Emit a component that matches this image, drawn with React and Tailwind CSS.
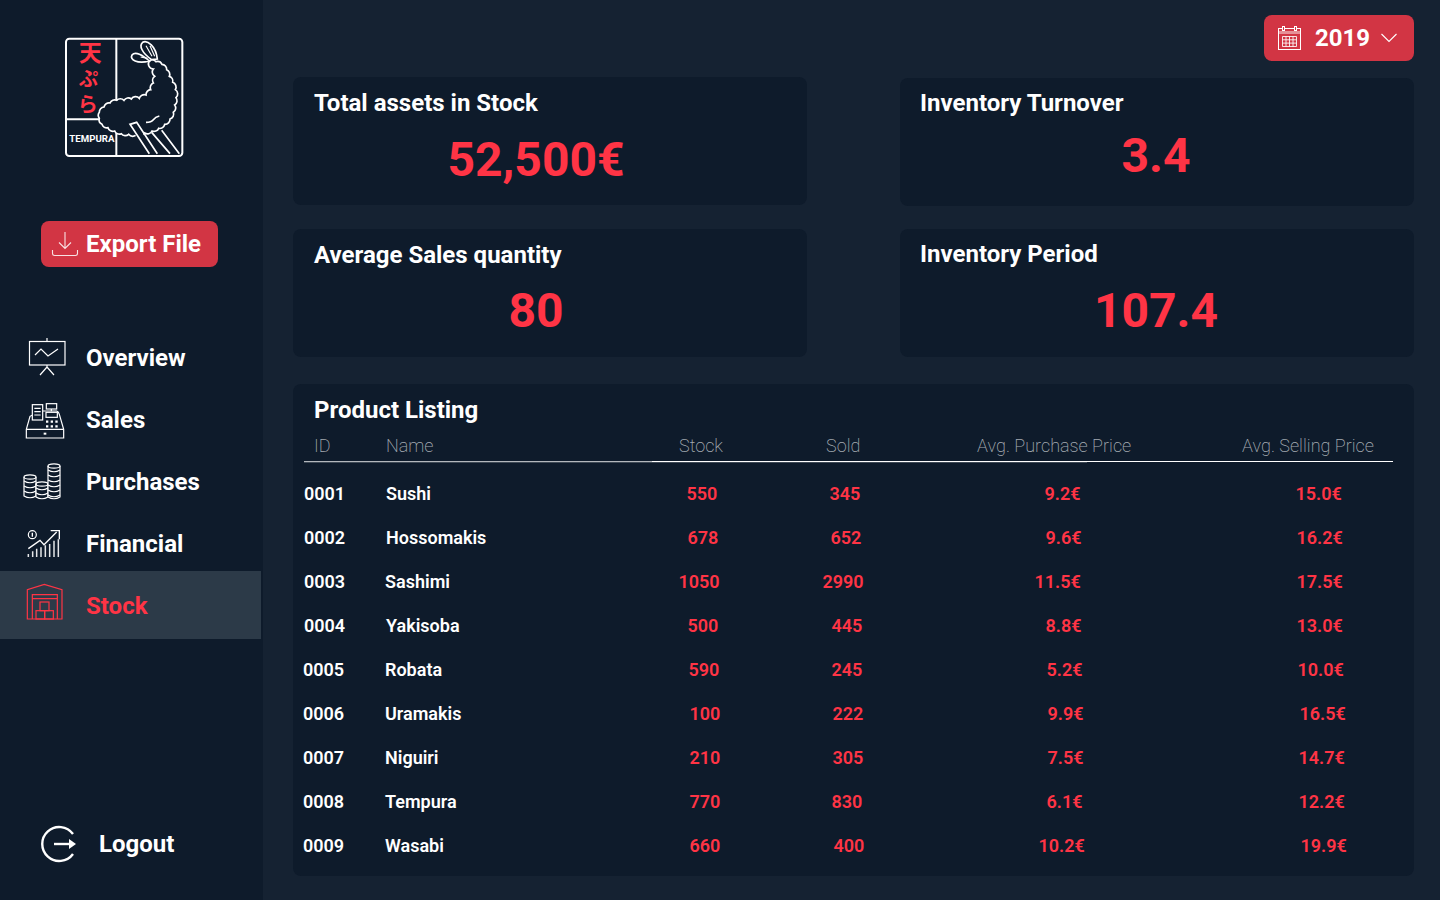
const ROBOTO = "font-['Roboto',sans-serif]";

function Logo() {
  const pts = [[300,106],[318,110],[336,118],[350,134],[358,154],[368,172],[376,194],[378,218],[374,240],[370,262],[360,282],[344,298],[326,310],[306,318],[284,324],[260,328],[236,328],[214,326],[194,318],[174,308],[156,298],[148,280],[148,262],[162,246],[180,234],[200,226],[222,226],[244,222],[268,220],[288,210],[302,194],[310,174],[314,154],[310,132],[300,106]];
  let d = `M${pts[0][0]} ${pts[0][1]}`;
  for (let i = 1; i < pts.length; i++) d += `A15 15 0 0 1 ${pts[i][0]} ${pts[i][1]}`;
  return (
    <svg width="150" height="145" viewBox="0 0 450 435" fill="none" stroke="#fff" strokeWidth="6">
      <path d="M199 42V392M49 283H197" />
      <path d={d} fill="#0e1b2b" strokeWidth="5" />
      <path d="M288 386L238 298L260 292L312 386Z" fill="#0e1b2b" stroke="none" />
      <path d="M356 392L304 326L334 318L388 392Z" fill="#0e1b2b" stroke="none" />
      <path d="M298 386L240 298L260 292L322 386" strokeWidth="5" />
      <path d="M360 386L305 322M388 386L335 316" strokeWidth="5" />
      <rect x="48" y="41" width="349" height="352" rx="10" />
      <path d="M305 104C276 84 266 62 278 52C292 44 318 64 322 102Z" strokeWidth="5" fill="#0e1b2b" />
      <path d="M298 108C278 90 256 78 246 90C238 104 262 118 298 108Z" strokeWidth="5" fill="#0e1b2b" />
      <path d="M288 62L306 94M300 62L314 94M272 96L292 100" strokeWidth="3.5" />
      <path d="M288 292Q304 292 310 284T328 273" strokeWidth="5" />
      <text x="121" y="108" textAnchor="middle" fill="#ff3445" stroke="none" fontSize="68" fontWeight="700" fontFamily="'Noto Sans CJK JP',sans-serif">天</text>
      <text x="115" y="184" textAnchor="middle" fill="#ff3445" stroke="none" fontSize="58" fontWeight="700" fontFamily="'Noto Sans CJK JP',sans-serif">ぷ</text>
      <text x="113" y="262" textAnchor="middle" fill="#ff3445" stroke="none" fontSize="60" fontWeight="700" fontFamily="'Noto Sans CJK JP',sans-serif">ら</text>
      <text x="58" y="350" fill="#fff" stroke="none" fontSize="29" fontWeight="700" fontFamily="'Roboto',sans-serif">TEMPURA</text>
    </svg>
  );
}

function OverviewIcon() {
  return (
    <svg width="40" height="40" viewBox="0 0 40 40" fill="none" stroke="#fff" strokeWidth="1.2">
      <path d="M19 0V3" />
      <rect x="1.5" y="3.5" width="35.5" height="23.5" />
      <path d="M7 17L13 11L20 18L30 11" />
      <path d="M19 27V29M12 37L19 29L26 37" />
    </svg>
  );
}
function SalesIcon() {
  return (
    <svg width="50" height="50" viewBox="0 0 150 150" fill="none" stroke="#fff" strokeWidth="3.6">
      <path d="M38 60L30 64L19 103V129H131V103L118 58Q116 50 110 48H69" />
      <path d="M19 103H131" />
      <rect x="37" y="29" width="31" height="46" fill="#0e1b2b" />
      <path d="M43 40H62M43 50H62M43 60H62" />
      <rect x="79" y="26" width="31" height="16" />
      <path d="M94 42V49" />
      <rect x="78" y="52" width="34" height="15" />
      <path d="M78 80h7M92 80h7M106 80h7M78 94h7M92 94h7M106 94h7" strokeWidth="7" />
      <path d="M71 116H79" strokeWidth="6" />
    </svg>
  );
}
function Stack({ x, top, bottom }) {
  const rows = [];
  for (let y = top + 4; y < bottom; y += 5) rows.push(y);
  return (
    <g>
      <path d={`M${x - 6} ${top}V${bottom}Q${x} ${bottom + 3.5} ${x + 6} ${bottom}V${top}`} fill="#0e1b2b" />
      <ellipse cx={x} cy={top} rx="6" ry="2.2" />
      {rows.map((y) => (
        <path key={y} d={`M${x - 6} ${y}Q${x} ${y + 3.5} ${x + 6} ${y}`} />
      ))}
    </g>
  );
}
function CoinsIcon() {
  return (
    <svg width="40" height="38" viewBox="0 0 40 38" fill="none" stroke="#fff" strokeWidth="1.2">
      <Stack x={8} top={14} bottom={33} />
      <Stack x={20} top={21} bottom={34} />
      <Stack x={32} top={3} bottom={34} />
    </svg>
  );
}
function FinancialIcon() {
  return (
    <svg width="50" height="45" viewBox="0 0 150 135" fill="none" stroke="#fff" strokeWidth="3.6">
      <circle cx="37" cy="38" r="12" />
      <path d="M37 32V44" strokeWidth="4" />
      <path d="M25 80L60 55L72 68L110 30" strokeWidth="4" />
      <path d="M92 26H118V52" strokeWidth="4" />
      <path d="M25 105V96M38 105V88M50 105V80M63 105V76M76 105V70M89 105V66M102 105V56M115 105V52" strokeWidth="4.5" stroke="#e4e6e8" />
    </svg>
  );
}
function StockIcon() {
  return (
    <svg width="40" height="38" viewBox="75 400 120 114" fill="none" stroke="#ff3445" strokeWidth="3.6">
      <path d="M82 508V420L133 404L186 420V508Z" />
      <path d="M97 508V435H172V508M97 447H172" />
      <rect x="120" y="457" width="27" height="26" />
      <rect x="108" y="483" width="26" height="25" />
      <rect x="134" y="483" width="26" height="25" />
    </svg>
  );
}
function DownloadIcon() {
  return (
    <svg width="28" height="26" viewBox="0 0 28 26" fill="none" stroke="#fff" strokeOpacity="0.85" strokeWidth="1.1">
      <path d="M14 1V17M8 11.5L14 17.5L20 11.5" />
      <path d="M1.5 19V22.5Q1.5 24.5 3.5 24.5H24.5Q26.5 24.5 26.5 22.5V19" />
    </svg>
  );
}
function CalendarIcon() {
  return (
    <svg width="23" height="24" viewBox="0 0 23 24" fill="none" stroke="#fff" strokeWidth="1">
      <rect x="0.5" y="2.5" width="22" height="21" />
      <rect x="1" y="5" width="21" height="3" fill="#fff" fillOpacity="0.45" stroke="none" />
      <rect x="4.5" y="0.5" width="2" height="4" fill="#d23544" />
      <rect x="16.5" y="0.5" width="2" height="4" fill="#d23544" />
      <path d="M4.5 10.5H18.5V20.5H4.5ZM4.5 13.8H18.5M4.5 17.1H18.5M8 10.5V20.5M11.5 10.5V20.5M15 10.5V20.5" strokeOpacity="0.85" />
    </svg>
  );
}
function LogoutIcon() {
  return (
    <svg width="38" height="38" viewBox="0 0 38 38" fill="none" stroke="#fff">
      <path d="M33 9A17 17 0 1 0 33 29" strokeWidth="2.4" />
      <path d="M14 19H31" strokeWidth="2.4" />
      <path d="M29 14L36 19L29 24Z" fill="#fff" stroke="none" />
    </svg>
  );
}

const NAV = [
  { label: "Overview", icon: <OverviewIcon />, ml: "ml-[28px]", w: "w-[58px]" },
  { label: "Sales", icon: <SalesIcon />, ml: "ml-[20px]", w: "w-[66px]" },
  { label: "Purchases", icon: <CoinsIcon />, ml: "ml-[22px]", w: "w-[64px]" },
  { label: "Financial", icon: <FinancialIcon />, ml: "ml-[20px]", w: "w-[66px]" },
];

function Sidebar() {
  return (
    <aside className="w-[263px] h-[900px] shrink-0 bg-[#0e1b2b] flex flex-col">
      <div className="pt-[25px] pl-[50px] h-[170px]"><Logo /></div>
      <div className="pl-[41px] pt-[51px]">
        <button className="w-[177px] h-[46px] rounded-lg bg-[#d23544] flex items-center pl-[10px] gap-[1px] text-white text-[24px] leading-none">
          <DownloadIcon />
          <span className="ml-[6px] font-bold">Export File</span>
        </button>
      </div>
      <nav className="mt-[60px] flex flex-col">
        {NAV.map((n) => (
          <div key={n.label} className="h-[62px] flex items-center text-white text-[24px] font-bold">
            <div className={`${n.ml} ${n.w} flex items-center`}>{n.icon}</div>
            <span>{n.label}</span>
          </div>
        ))}
        <div className="w-[261px] h-[68px] -mt-[4px] -mb-[2px] flex items-center bg-[#2c3a48] text-[#ff3445] text-[24px] font-bold">
          <div className="ml-[25px] w-[61px] flex items-center -mt-[7px]"><StockIcon /></div>
          <span className="mt-[2px]">Stock</span>
        </div>
      </nav>
      <div className="mt-[188px] flex items-center pl-[40px] text-white text-[24px] font-bold">
        <LogoutIcon />
        <span className="ml-[21px]">Logout</span>
      </div>
    </aside>
  );
}

function Card({ title, value, valueClass, className = "" }) {
  return (
    <div className={`h-[128px] rounded-lg bg-[#0e1b2b] ${className}`}>
      <div className="text-white text-[24px] leading-[28px] font-bold">{title}</div>
      <div className={`text-[#ff3445] text-[48px] text-center font-bold leading-none ${valueClass}`}>{value}</div>
    </div>
  );
}

const ROWS = [
  ["0001","Sushi","550","345","9.2€","15.0€",[304,386,687,830,1045,1296]],
  ["0002","Hossomakis","678","652","9.6€","16.2€",[304,386,688,831,1046,1297]],
  ["0003","Sashimi","1050","2990","11.5€","17.5€",[304,385,679,823,1035,1297]],
  ["0004","Yakisoba","500","445","8.8€","13.0€",[304,386,688,832,1046,1297]],
  ["0005","Robata","590","245","5.2€","10.0€",[303,385,689,832,1047,1298]],
  ["0006","Uramakis","100","222","9.9€","16.5€",[303,385,690,833,1048,1300]],
  ["0007","Niguiri","210","305","7.5€","14.7€",[303,385,690,833,1048,1299]],
  ["0008","Tempura","770","830","6.1€","12.2€",[303,385,690,832,1047,1299]],
  ["0009","Wasabi","660","400","10.2€","19.9€",[303,385,690,834,1039,1301]],
];
const HEAD = [["ID",314],["Name",386],["Stock",679],["Sold",826],["Avg. Purchase Price",977],["Avg. Selling Price",1242]];

function Table() {
  return (
    <section className="mt-[27px] h-[492px] rounded-lg bg-[#0e1b2b] flex flex-col">
      <div className="pl-[21px] pt-[12px] text-white text-[24px] leading-[28px] font-bold">Product Listing</div>
      <div className="mt-[10px] flex h-[23px] items-center text-[18px] leading-[23px] font-extralight text-[#a5abb2]">
        {HEAD.map(([t, x], i) => (
          <div
            key={t}
            style={{ marginLeft: i === 0 ? x - 293 : 0, width: i < HEAD.length - 1 ? HEAD[i + 1][1] - x : undefined }}
            className="shrink-0 whitespace-nowrap"
          >{t}</div>
        ))}
      </div>
      <div className="mt-[4px] ml-[11px] w-[1089px] flex h-px">
        <div className="w-[348px] bg-[#b4b8bd]" />
        <div className="flex-1 bg-white" />
      </div>
      <div className="ml-[11px] w-[783px] h-px bg-[#3f4a56]" />
      <div className="mt-[8px] flex flex-col">
        {ROWS.map((r) => (
          <div key={r[0]} className="h-[44px] flex items-center text-[18px] font-semibold">
            {r.slice(0, 6).map((c, i) => {
              const xs = r[6];
              const w = i < 5 ? xs[i + 1] - xs[i] - (i === 1 ? 0.5 : 0) : undefined;
              return (
                <div
                  key={i}
                  style={{ marginLeft: i === 0 ? xs[0] - 293 : 0, width: w }}
                  className={`shrink-0 whitespace-nowrap ${i < 2 ? "text-white" : "text-[#ff3445]"}`}
                >{c}</div>
              );
            })}
          </div>
        ))}
      </div>
    </section>
  );
}

export default function App() {
  return (
    <div className={`w-[1440px] h-[900px] overflow-hidden flex bg-[#152232] ${ROBOTO}`}>
      <Sidebar />
      <main className="flex-1 pl-[30px] pr-[26px]">
        <div className="h-[77px] flex justify-end pt-[15px]">
          <button className="w-[150px] h-[46px] rounded-lg bg-[#d23544] flex items-center pl-[14px] text-white text-[24px] font-bold leading-none">
            <CalendarIcon />
            <span className="ml-[14px]">2019</span>
            <svg className="ml-[11px]" width="16" height="10" viewBox="0 0 16 10" fill="none" stroke="#fff" strokeWidth="1.1"><path d="M0.5 1L8 8.5L15.5 1" /></svg>
          </button>
        </div>
        <div className="grid grid-cols-[514px_514px] gap-x-[93px] gap-y-[23px]">
          <Card title="Total assets in Stock" value="52,500€" className="pl-[21px] pt-[12px]" valueClass="mt-[19px] pr-[49px]" />
          <Card title="Inventory Turnover" value="3.4" className="mt-px pl-[20px] pr-[22px] pt-[11px]" valueClass="mt-[15px]" />
          <Card title="Average Sales quantity" value="80" className="pl-[21px] pt-[12px]" valueClass="mt-[18px] pr-[49px]" />
          <Card title="Inventory Period" value="107.4" className="pl-[20px] pr-[22px] pt-[11px]" valueClass="mt-[19px]" />
        </div>
        <Table />
      </main>
    </div>
  );
}
